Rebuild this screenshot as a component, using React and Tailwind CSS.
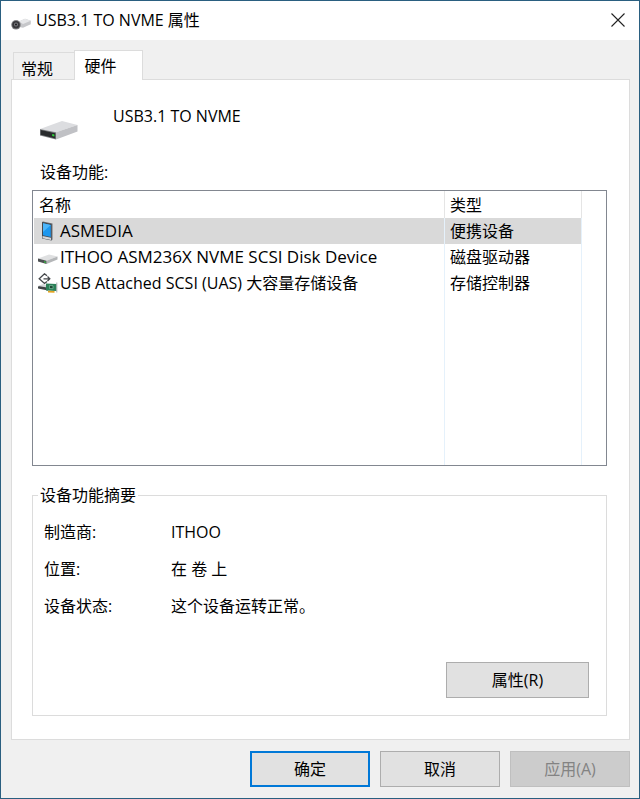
import { useState } from 'react';

const devices = [
  { name: 'ASMEDIA', type: '便携设备', icon: PortableIcon, size: 'text-[17px]' },
  { name: 'ITHOO ASM236X NVME SCSI Disk Device', type: '磁盘驱动器', icon: DiskIcon, size: 'text-[17px]' },
  { name: 'USB Attached SCSI (UAS) 大容量存储设备', type: '存储控制器', icon: ControllerIcon, size: 'text-base' },
];

const summary = [
  { label: '制造商:', value: 'ITHOO' },
  { label: '位置:', value: '在 卷 上' },
  { label: '设备状态:', value: '这个设备运转正常。' },
];

function TitleIcon() {
  return (
    <svg viewBox="0 0 20 12" className="h-3 w-5" aria-hidden="true">
      <path d="M8 3.500 14 .8 19.800 2.800V6.200L12 9.800 8 9Z" fill="#c6c7ca" />
      <path d="M8 3.500 14 .8 19.800 2.800 12 6Z" fill="#e6e7e9" />
      <circle cx="5" cy="6.800" r="4.800" fill="#838386" />
      <circle cx="5" cy="6.800" r="3.800" fill="#37373a" />
      <circle cx="5" cy="6.500" r="2" fill="#7b7b80" />
      <circle cx="5" cy="6.500" r="1" fill="#19191b" />
    </svg>
  );
}

function DriveIcon() {
  return (
    <svg viewBox="0 0 38 20" className="h-5 w-[38px]" aria-hidden="true">
      <path d="M0 9 22 1 37.500 5 16 12.300Z" fill="#dcdde0" />
      <path d="M16 12.300 37.500 5V11.500L16 19.500Z" fill="#c0c1c5" />
      <path d="M0 9 16 12.300V19.500L0 15.500Z" fill="#7a7c7f" />
      <path d="M.7 10 15.300 13.200V18.400L.7 14.800Z" fill="#292b2d" />
      <path d="M12.200 14 14.400 14.500V16.500L12.200 16Z" fill="#2fd63a" />
    </svg>
  );
}

function PortableIcon() {
  return (
    <svg viewBox="0 0 20 20" className="h-5 w-5" aria-hidden="true">
      <path d="M4 1 5 .5 14.500 2.500V18.500L13.500 19.500Z" fill="#6d7176" />
      <path d="M4 1 13.500 3V19.500L4 17.500Z" fill="#45494e" />
      <path d="M5 2.300 12.800 4V16L5 14.300Z" fill="#1c97ee" />
      <path d="M5 2.300 12.800 4 5 11Z" fill="#4db6fa" />
      <path d="M4.500 15 13 16.800V19L4.500 17.200Z" fill="#d4d7da" />
    </svg>
  );
}

function DiskIcon() {
  return (
    <svg viewBox="0 0 20 20" className="h-5 w-5" aria-hidden="true">
      <path d="M0 11.500 11 7.500 19.500 9.500 8.500 13.800Z" fill="#dfe0e1" />
      <path d="M8.500 13.800 19.500 9.500V12.500L8.500 17Z" fill="#b4b6b8" />
      <path d="M0 11.500 8.500 13.800V17L0 14.500Z" fill="#4d5052" />
      <path d="M6 14.300 7.800 14.800V16L6 15.500Z" fill="#35c241" />
    </svg>
  );
}

function ControllerIcon() {
  return (
    <svg viewBox="0 0 20 20" className="h-5 w-5" aria-hidden="true">
      <path d="M0 13.500 4 12 10 14V17.500L0 15.500Z" fill="#3f4245" />
      <path d="M0 13 5 11 10 12.500 9 14.500Z" fill="#d5d7d9" />
      <path d="M9 2.800 6.500 .8 1.200 5.800 6.500 10.500 9 8.500M5.500 5.800H11.500M9.500 3.500 11.800 5.800 9.500 8" fill="none" stroke="#45484b" strokeWidth="1.300" />
      <path d="M8 10.500 18.500 11V18L8 17.500Z" fill="#2b8058" />
      <path d="M11.500 12.500 15 12.700V15.700L11.500 15.500Z" fill="#1d4433" stroke="#8fd0ae" strokeWidth=".6" />
      <path d="M18.800 9.500V19.500" stroke="#a7abae" />
      <path d="M10 17.700 16.500 18V19.800L10 19.500Z" fill="#e3a421" />
    </svg>
  );
}

function DialogButton({ className = 'w-[120px] border border-[#adadad] bg-[#e1e1e1]', ...props }) {
  return <button type="button" className={`h-9 ${className}`} {...props} />;
}

export default function App() {
  const [selected, setSelected] = useState('ASMEDIA');

  return (
    <div className="flex min-h-screen flex-col border border-[#2a5f80] bg-[#f0f0f0] font-['Open_Sans','Noto_Sans_CJK_SC',sans-serif] text-base leading-6 text-black">
      <header className="flex h-[39px] items-center bg-white pr-2.5 pb-0.5 pl-2.5">
        <span className="mt-2"><TitleIcon /></span>
        <h1 className="ml-[5px] flex-1">USB3.1 TO NVME 属性</h1>
        <button type="button" aria-label="关闭" className="p-1">
          <svg viewBox="0 0 14 14" className="size-3.5" aria-hidden="true">
            <path d="M.5.5 13.500 13.500M13.500.5.5 13.500" stroke="#222" strokeWidth="1.100" />
          </svg>
        </button>
      </header>

      <main className="flex flex-1 flex-col pt-2.5 pr-[9px] pl-2.5">
        <div role="tablist" className="flex items-end px-0.5">
          <button type="button" role="tab" aria-selected="false" className="h-[27px] w-[61px] border border-r-0 border-b-0 border-[#dcdcdc] pt-1 pr-3.5">
            常规
          </button>
          <button type="button" role="tab" aria-selected="true" className="z-10 -mb-px h-[30px] w-[69px] border border-b-0 border-[#dcdcdc] bg-white pr-4">
            硬件
          </button>
        </div>

        <section role="tabpanel" className="flex-1 border border-[#dcdcdc] bg-white pt-6 pr-[22px] pb-[23px] pl-5">
          <div className="flex h-9 pl-2">
            <span className="mt-4"><DriveIcon /></span>
            <p className="ml-[35px]">USB3.1 TO NVME</p>
          </div>

          <h2 id="functions" className="mt-5 mb-1.5 pl-2">设备功能:</h2>
          <div className="h-[276px] border border-[#828790] pr-6 pl-px">
            <table aria-labelledby="functions" className="h-full w-full table-fixed text-left">
              <thead>
                <tr className="h-[27px]">
                  <th className="border-r border-[#e5e5e5] p-0 pl-[5px] font-normal">名称</th>
                  <th className="w-[137px] border-r border-[#e5e5e5] p-0 pl-[5px] font-normal">类型</th>
                </tr>
              </thead>
              <tbody>
                {devices.map(({ name, type, icon: Icon, size }) => (
                  <tr
                    key={name}
                    onClick={() => setSelected(name)}
                    className={selected === name ? 'h-[26px] bg-[#d9d9d9]' : 'h-[26px]'}
                  >
                    <td className="border-r border-[#e5f1fb] p-0 pl-1">
                      <span className="flex items-center gap-0.5 whitespace-nowrap">
                        <Icon />
                        <span className={`${size} leading-6`}>{name}</span>
                      </span>
                    </td>
                    <td className="border-r border-[#e5f1fb] p-0 pl-[5px]">{type}</td>
                  </tr>
                ))}
                <tr aria-hidden="true">
                  <td className="border-r border-[#e5f1fb]" />
                  <td className="border-r border-[#e5f1fb]" />
                </tr>
              </tbody>
            </table>
          </div>

          <fieldset className="mt-[17px] border border-[#dcdcdc] px-[11px] pb-[17px]">
            <legend className="-ml-1.5 px-0.5">设备功能摘要</legend>
            <dl className="mt-[13px] space-y-[13px]">
              {summary.map((item) => (
                <div key={item.label} className="flex">
                  <dt className="w-[127px]">{item.label}</dt>
                  <dd>{item.value}</dd>
                </div>
              ))}
            </dl>
            <div className="mt-11 flex justify-end pr-1.5">
              <DialogButton className="w-[143px] border border-[#adadad] bg-[#e1e1e1]">属性(R)</DialogButton>
            </div>
          </fieldset>
        </section>
      </main>

      <footer className="flex justify-end gap-2.5 pt-[11px] pr-[9px] pb-[11px] pl-2.5">
        <DialogButton className="w-[120px] border-2 border-[#0078d7] bg-[#e1e1e1]">确定</DialogButton>
        <DialogButton>取消</DialogButton>
        <DialogButton disabled className="w-[120px] border border-[#bfbfbf] bg-[#cccccc] text-[#838383]">应用(A)</DialogButton>
      </footer>
    </div>
  );
}
